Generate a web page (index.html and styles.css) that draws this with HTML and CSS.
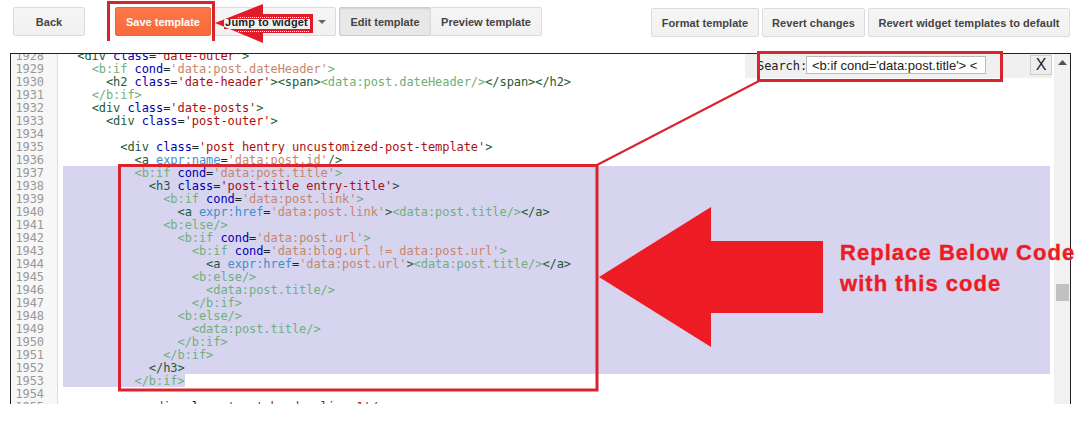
FILE: index.html
```html
<!DOCTYPE html>
<html lang="en">
<head>
<meta charset="utf-8">
<title>Edit template</title>
<link rel="stylesheet" href="styles.css">
</head>
<body>
<div class="toolbar">
  <div class="group">
    <button class="btn back">Back</button>
    <button class="btn save">Save template</button>
    <button class="btn jump">Jump to widget<span class="caret"></span></button>
    <div class="seg">
      <button class="btn edit">Edit template</button>
      <button class="btn preview">Preview template</button>
    </div>
  </div>
  <div class="group right">
    <button class="btn format">Format template</button>
    <button class="btn revert">Revert changes</button>
    <button class="btn widgets">Revert widget templates to default</button>
  </div>
</div>
<div class="editor">
  <div class="gutter">
    <div>1928</div><div>1929</div><div>1930</div><div>1931</div><div>1932</div><div>1933</div><div>1934</div><div>1935</div><div>1936</div><div>1937</div><div>1938</div><div>1939</div><div>1940</div><div>1941</div><div>1942</div><div>1943</div><div>1944</div><div>1945</div><div>1946</div><div>1947</div><div>1948</div><div>1949</div><div>1950</div><div>1951</div><div>1952</div><div>1953</div><div>1954</div><div>1955</div>
  </div>
  <div class="code">
    <div class="row">  <i>&lt;div</i> <b>class</b>=<u>'date-outer'</u><i>&gt;</i></div>
    <div class="row">    <s>&lt;b:if</s> <b>cond</b>=<em>'data:post.dateHeader'</em><s>&gt;</s></div>
    <div class="row">      <i>&lt;h2</i> <b>class</b>=<u>'date-header'</u><i>&gt;&lt;span&gt;</i><s>&lt;data:post.dateHeader/&gt;</s><i>&lt;/span&gt;&lt;/h2&gt;</i></div>
    <div class="row">    <s>&lt;/b:if&gt;</s></div>
    <div class="row">    <i>&lt;div</i> <b>class</b>=<u>'date-posts'</u><i>&gt;</i></div>
    <div class="row">      <i>&lt;div</i> <b>class</b>=<u>'post-outer'</u><i>&gt;</i></div>
    <div class="row"> </div>
    <div class="row">        <i>&lt;div</i> <b>class</b>=<u>'post hentry uncustomized-post-template'</u><i>&gt;</i></div>
    <div class="row">          <i>&lt;a</i> <b class="expr">expr:name</b>=<em>'data:post.id'</em><i>/&gt;</i></div>
    <div class="row sel">          <s>&lt;b:if</s> <b>cond</b>=<em>'data:post.title'</em><s>&gt;</s></div>
    <div class="row sel">            <i>&lt;h3</i> <b>class</b>=<u>'post-title entry-title'</u><i>&gt;</i></div>
    <div class="row sel">              <s>&lt;b:if</s> <b>cond</b>=<em>'data:post.link'</em><s>&gt;</s></div>
    <div class="row sel">                <i>&lt;a</i> <b class="expr">expr:href</b>=<em>'data:post.link'</em><i>&gt;</i><s>&lt;data:post.title/&gt;</s><i>&lt;/a&gt;</i></div>
    <div class="row sel">              <s>&lt;b:else/&gt;</s></div>
    <div class="row sel">                <s>&lt;b:if</s> <b>cond</b>=<em>'data:post.url'</em><s>&gt;</s></div>
    <div class="row sel">                  <s>&lt;b:if</s> <b>cond</b>=<em>'data:blog.url != data:post.url'</em><s>&gt;</s></div>
    <div class="row sel">                    <i>&lt;a</i> <b class="expr">expr:href</b>=<em>'data:post.url'</em><i>&gt;</i><s>&lt;data:post.title/&gt;</s><i>&lt;/a&gt;</i></div>
    <div class="row sel">                  <s>&lt;b:else/&gt;</s></div>
    <div class="row sel">                    <s>&lt;data:post.title/&gt;</s></div>
    <div class="row sel">                  <s>&lt;/b:if&gt;</s></div>
    <div class="row sel">                <s>&lt;b:else/&gt;</s></div>
    <div class="row sel">                  <s>&lt;data:post.title/&gt;</s></div>
    <div class="row sel">                <s>&lt;/b:if&gt;</s></div>
    <div class="row sel">              <s>&lt;/b:if&gt;</s></div>
    <div class="row sel">            <i>&lt;/h3&gt;</i></div>
    <div class="row"><span class="sel-part">          <s>&lt;/b:if&gt;</s></span></div>
    <div class="row"> </div>
    <div class="row">            <i>&lt;div</i> <b>class</b>=<u>'post-header-line-1'</u><i>/&gt;</i></div>
  </div>
  <div class="scrollbar">
    <svg class="up" width="9" height="5" viewBox="0 0 9 5"><path d="M4.500 0L9 5H0z"/></svg>
    <div class="thumb"></div>
  </div>
  <div class="search">
    <label class="search-label">Search:</label>
    <input class="search-input" type="text" value="&lt;b:if cond='data:post.title'&gt; &lt;">
    <button class="close">X</button>
  </div>
</div>
<svg class="marks" width="1084" height="441" viewBox="0 0 1084 441">
  <path class="outline" d="M108.500 41V2.500H213.500V41"/>
  <path class="hollow" fill-rule="evenodd" d="M215 23L263 4V14H313V33H263V43ZM224 19V29H310V19Z"/>
  <path class="dots" d="M238 17.500H310M238 31.500H310"/>
  <path class="outline" d="M758.500 52.500H1001.500V80.500H758.500Z"/>
  <path class="outline" d="M119.500 165.500H597V390H119.500Z"/>
  <path class="outline thin" d="M759 81L597 165"/>
  <path class="solid" d="M599 277L711 207V241H823V313H711V347Z"/>
</svg>
<div class="note">Replace Below Code<br>with this code</div>
</body>
</html>
```
FILE: styles.css
```css
html, body { margin: 0; padding: 0; background: #fff; }
body { width: 1084px; height: 441px; overflow: hidden; position: relative; font-family: "Liberation Sans", Arial, sans-serif; }

.toolbar { display: flex; justify-content: space-between; padding: 7px 14px 0 13px; height: 53px; box-sizing: border-box; }
.group { display: flex; gap: 3px; align-items: flex-start; }
.right { margin-top: 1px; letter-spacing: 0.06px; }
.btn { height: 29px; padding: 0; box-sizing: border-box; border: 1px solid #dcdcdc; border-radius: 2px; background: linear-gradient(#f5f5f5, #f1f1f1); color: #444; font: bold 11px "Liberation Sans", Arial, sans-serif; letter-spacing: inherit; white-space: nowrap; }
.back { width: 72px; margin-right: 27px; }
.save { width: 96px; background: linear-gradient(#fb7848, #f9693b); border-color: #e5683f; color: #fff; }
.jump { width: 122px; padding-left: 1px; color: #222; letter-spacing: 0.15px; }
.caret { display: inline-block; margin-left: 10px; vertical-align: 2px; border: 4px solid transparent; border-top-color: #666; border-bottom-width: 0; }
.seg { display: flex; }
.edit { width: 92px; background: #e8e8e8; border-color: #ccc; box-shadow: inset 0 1px 2px rgba(0,0,0,.1); }
.preview { width: 112px; margin-left: -1px; }
.format { width: 108px; }
.revert { width: 103px; }
.widgets { width: 202px; }

.editor { position: relative; display: flex; width: 1061px; height: 351px; box-sizing: border-box; margin-left: 10px; border: solid #222; border-width: 1px 1px 0 1px; overflow: hidden; background: #fff; font: 12px/13px "DejaVu Sans Mono", monospace; letter-spacing: -0.07px; }
.gutter { width: 47px; flex: none; box-sizing: border-box; margin-top: -4px; padding: 0 13px 0 0; height: 360px; background: #f7f7f7; border-right: 1px solid #ddd; color: #999; text-align: right; }
.code { flex: none; width: 987px; margin: -5px 0 0 5px; color: #222; }
.row { height: 13px; line-height: 15px; white-space: pre; }
.sel, .sel-part { background: #d7d4f0; }
.sel-part { display: inline-block; height: 13px; }
.code i { font-style: normal; color: #1d5b35; }
.code s { text-decoration: none; color: #6fb07a; }
.code b { font-weight: normal; color: #0000b0; }
.code b.expr { color: #3d8fd0; }
.code u { text-decoration: none; color: #a11; }
.code em { font-style: normal; color: #c8866a; }

.scrollbar { flex: none; width: 16px; margin-left: 4px; background: #f1f1f1; display: flex; flex-direction: column; align-items: center; }
.up { margin-top: 6px; fill: #505050; flex: none; }
.thumb { width: 13px; height: 17px; margin-top: 219px; background: #c1c1c1; flex: none; }

.search { position: absolute; top: 0; left: 734px; width: 307px; height: 24px; background: #f0f0f0; display: flex; align-items: flex-start; }
.search-label { font: 12px/24px "DejaVu Sans Mono", monospace; color: #222; margin-left: 12px; width: 49px; flex: none; }
.search-input { width: 180px; height: 18px; margin-top: 2px; box-sizing: border-box; padding: 0 5px; border: 1px solid #bbb; background: #fff; color: #222; font: 13px "Liberation Sans", Arial, sans-serif; outline: none; }
.close { width: 22px; height: 20px; margin: 1px 0 0 44px; padding: 0; box-sizing: border-box; border: 1px solid #ccc; background: #eee; color: #222; font: 16px "Liberation Sans", Arial, sans-serif; }

.marks { position: absolute; left: 0; top: 0; pointer-events: none; }
.outline { fill: none; stroke: #d9232e; stroke-width: 3; }
.thin { stroke-width: 2; }
.hollow { fill: #e01b2a; }
.dots { fill: none; stroke: #fff; stroke-width: 1; stroke-dasharray: 1 1; }
.solid { fill: #ed1c24; }
.note { position: absolute; left: 840px; top: 237px; color: #ed1c24; font: bold 22px/31px "Liberation Sans", Arial, sans-serif; letter-spacing: 1.05px; -webkit-text-stroke: 0.4px #ed1c24; white-space: nowrap; }
```
